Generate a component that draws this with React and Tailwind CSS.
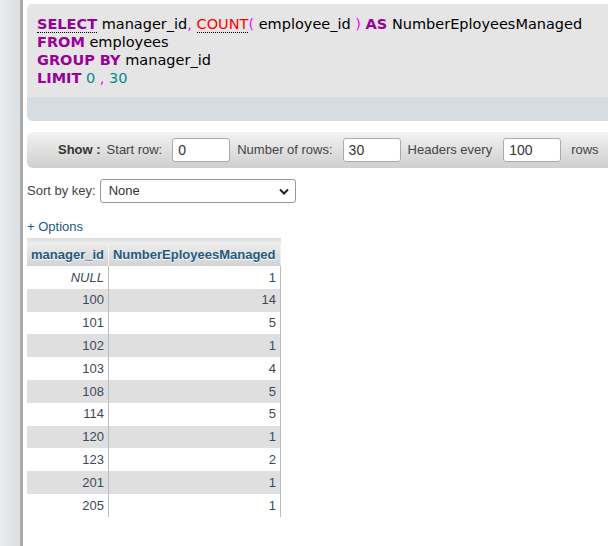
import React from 'react';

const rows = [
  { id: 'NULL', n: 1 },
  { id: '100', n: 14 },
  { id: '101', n: 5 },
  { id: '102', n: 1 },
  { id: '103', n: 4 },
  { id: '108', n: 5 },
  { id: '114', n: 5 },
  { id: '120', n: 1 },
  { id: '123', n: 2 },
  { id: '201', n: 1 },
  { id: '205', n: 1 },
];

const kw = 'font-bold text-[#990099]';
const punc = 'text-[#ff00ff]';
const num = 'text-[#008b8b]';

function NumInput({ value }) {
  return (
    <div className="w-[58px] h-[24px] mr-[7px] bg-white border border-[#aaa] rounded-[3px] px-[5px] flex items-center text-[14px] text-[#333]">
      {value}
    </div>
  );
}

export default function App() {
  return (
    <div className="flex min-h-[546px] bg-white font-['Liberation_Sans',Arial,sans-serif] text-[13px] text-[#444]">
      {/* left nav edge */}
      <div className="w-[20px] shrink-0 bg-gradient-to-r from-[#eaeced] to-[#dcdfe1]" />
      <div className="w-[3px] shrink-0 bg-[#a9a9a9]" />

      <div className="flex-1 min-w-0 pl-[4px] pt-[4px] overflow-hidden">
        {/* SQL query box */}
        <div className="w-[600px] rounded-l-[5px] overflow-hidden">
          <div className="bg-[#e5e5e5] pl-[10px] pt-[11px] pb-[10px] font-['DejaVu_Sans',Verdana,sans-serif] text-[14.5px] leading-[18px] text-[#000] whitespace-nowrap">
            <div>
              <span className={`${kw} border-b border-dotted border-[#000]`}>SELECT</span> manager_id<span className={punc}>,</span>{' '}
              <span className="text-[#ff0000] border-b border-dotted border-[#000]">COUNT</span>
              <span className={punc}>(</span> employee_id <span className={punc}>)</span> <span className={kw}>AS</span> NumberEployeesManaged
            </div>
            <div><span className={kw}>FROM</span> employees</div>
            <div><span className={kw}>GROUP BY</span> manager_id</div>
            <div>
              <span className={kw}>LIMIT</span> <span className={num}>0</span> <span className={punc}>,</span> <span className={num}>30</span>
            </div>
          </div>
          <div className="h-[24px] bg-[#d5dce2]" />
        </div>

        {/* Show bar */}
        <div className="mt-[11px] w-[600px] h-[36px] rounded-l-[6px] bg-gradient-to-b from-[#f2f2f2] to-[#cfcfcf] flex items-center pl-[31px] whitespace-nowrap">
          <span className="font-bold text-[#333] mr-[6px]">Show :</span>
          <span className="mr-[10px]">Start row:</span>
          <NumInput value="0" />
          <span className="mr-[10px]">Number of rows:</span>
          <NumInput value="30" />
          <span className="mr-[11px]">Headers every</span>
          <NumInput value="100" />
          <span className="ml-[3px]">rows</span>
        </div>

        {/* Sort by key */}
        <div className="mt-[11px] flex items-center gap-[4px]">
          <span>Sort by key:</span>
          <div className="w-[196px] h-[24px] bg-white border border-[#999] rounded-[3px] flex items-center justify-between pl-[8px] pr-[6px] text-[#333]">
            <span>None</span>
            <svg width="10" height="7" viewBox="0 0 10 7">
              <path d="M1 1.5 L5 5.5 L9 1.5" fill="none" stroke="#222" strokeWidth="2" />
            </svg>
          </div>
        </div>

        {/* Options */}
        <div className="mt-[16px] text-[#235a81] leading-[15px]">+ Options</div>

        {/* Result table */}
        <div className="mt-[4px] w-[254px]">
          <div className="h-[6px] bg-gradient-to-b from-[#dcdcdc] to-[#efefef]" />
          <table className="border-collapse w-[254px]">
            <thead>
              <tr className="h-[22px] bg-gradient-to-b from-[#ececec] to-[#d3d3d3]">
                <th className="w-[81px] px-[4px] text-[#235a81] font-bold text-left border-r border-[#f4f4f4] [text-shadow:0_1px_0_#fff]">
                  manager_id
                </th>
                <th className="px-[4px] text-[#235a81] font-bold text-left [text-shadow:0_1px_0_#fff]">
                  NumberEployeesManaged
                </th>
              </tr>
            </thead>
            <tbody>
              {rows.map((r, i) => (
                <tr key={r.id} className={`h-[22.8px] ${i % 2 === 1 ? 'bg-[#dfdfdf]' : 'bg-white'}`}>
                  <td className={`px-[4px] text-right border-r border-[#bbb] text-[#3b4a5b] ${r.id === 'NULL' ? 'italic' : ''}`}>
                    {r.id}
                  </td>
                  <td className="px-[4px] text-right border-r border-[#bbb] text-[#3b4a5b]">{r.n}</td>
                </tr>
              ))}
            </tbody>
          </table>
        </div>
      </div>
    </div>
  );
}
